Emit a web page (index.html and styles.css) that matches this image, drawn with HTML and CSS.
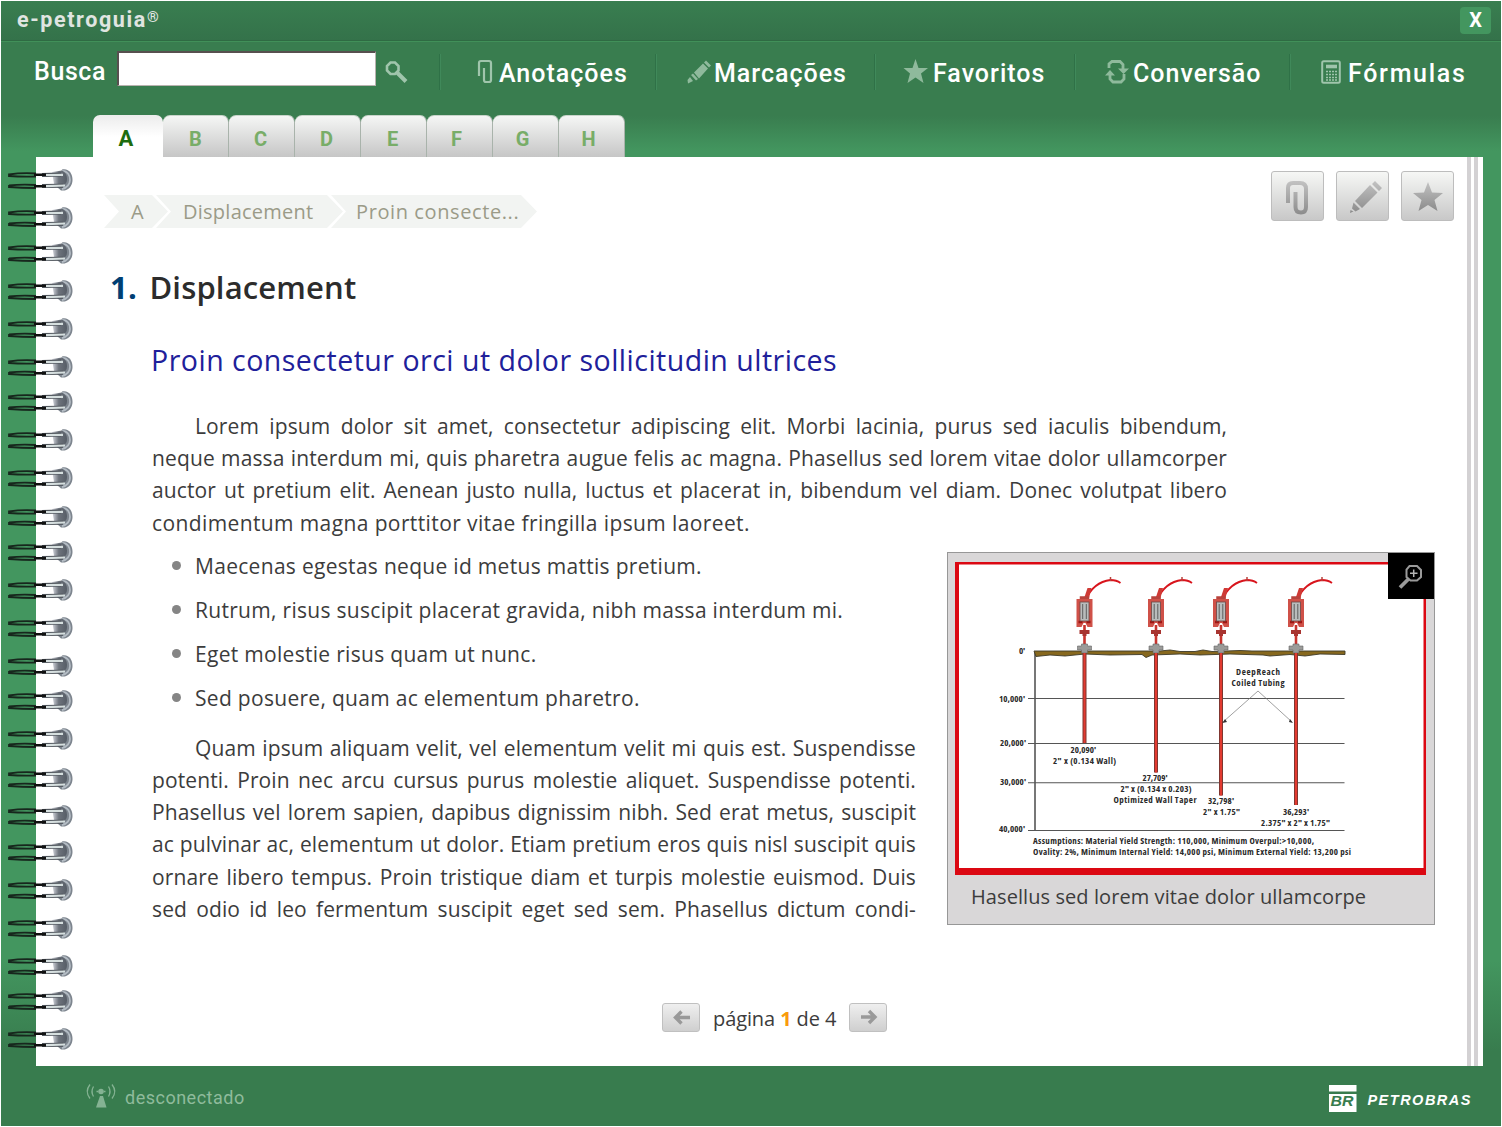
FILE: index.html
```
<!DOCTYPE html>
<html lang="pt-BR">
<head>
<meta charset="utf-8">
<title>e-petroguia</title>
<link rel="stylesheet" href="styles.css">
</head>
<body>
<svg class="defs" width="0" height="0" aria-hidden="true">
  <defs>
    <linearGradient id="iconGrad" x1="0" y1="0" x2="0" y2="1"><stop offset="0" stop-color="#c2c2c2"/><stop offset="1" stop-color="#8b8b8b"/></linearGradient>
    <linearGradient id="clipGrad" gradientUnits="userSpaceOnUse" x1="0" y1="0" x2="0" y2="34"><stop offset="0" stop-color="#c2c2c2"/><stop offset="1" stop-color="#8b8b8b"/></linearGradient>
    <linearGradient id="capGrad" x1="0" y1="0" x2="1" y2="0"><stop offset="0" stop-color="#d9dbe2"/><stop offset=".45" stop-color="#6d737c"/><stop offset="1" stop-color="#565d66"/></linearGradient>
    <g id="ring">
      <path d="M54 -10.500C61 -12 64.500 -6 64.500 0S60 11.500 53 10.500L49 7Z" fill="#7d858e"/>
      <path d="M54 -9C60 -9 62 -4 62 0S59 8 54 9" fill="none" stroke="#b4bcc4" stroke-width="1.800"/>
      <path d="M44 -8L54 -9.500Q59 -7 59 -1Q59 5 53 6L46 4Z" fill="url(#capGrad)"/>
      <path d="M34 -5L53 -5.500M34 6L55 5.800" stroke="#4b5158" stroke-width="4"/>
      <path d="M38 -5L55 -5.200M38 6.100L57 5.500" stroke="#d6dfdf" stroke-width="2.200"/>
      <path d="M1 -5.500Q14 -7.500 28 -6.500M1 -4Q14 -3 28 -3.500M1 5.500Q14 4 28 5M1 7Q14 8 28 8M1 -6.500V-3M1 5V8" fill="none" stroke="#17271d" stroke-width="1.800"/>
      <path d="M26 -5.200H38M26 6.300H38" stroke="#111" stroke-width="2.600"/>
    </g>
    <g id="rig">
      <path d="M1 -53Q9 -71 26 -73Q32 -73 36 -70" fill="none" stroke="#d8141c" stroke-width="1.800"/>
      <path d="M-1 -53L3 -65L7 -65L4 -53Z" fill="#cf3a35"/>
      <path d="M26 -76V-72M-4 -56H4V-53H-4Z" stroke="#b8433c" stroke-width="1.500" fill="#b8433c"/>
      <path d="M-8 -54H8V-26H3L1 -30H-1L-3 -26H-8Z" fill="#cf5148"/>
      <path d="M-6 -31H-2M2 -31H6" stroke="#a01613" stroke-width="2.500"/>
      <rect x="-4.500" y="-51" width="9" height="19" fill="#b9bcbc" stroke="#6c4845" stroke-width=".8"/>
      <path d="M-1.800 -49V-34M1.800 -49V-34" stroke="#555" stroke-width=".9"/>
      <path d="M0 -28V-5" stroke="#c8342e" stroke-width="2.600"/>
      <path d="M-5 -23H5V-19H2V-17H-2V-19H-5Z" fill="#a83430"/>
      <path d="M-7 -7H-3V-9H3V-7H7V-3H3V0H-3V-3H-7Z" fill="#9b9b99" stroke="#666" stroke-width=".6"/>
    </g>
  </defs>
</svg>

<div class="app">
  <header class="titlebar">
    <span class="brand">e-petroguia<sup>®</sup></span>
    <button class="close">X</button>
  </header>

  <div class="toolbar">
    <label class="search"><span class="search-label">Busca</span><input type="text">
      <svg width="24" height="24" viewBox="0 0 24 24"><path d="M5.500 2.500H10L13.500 6V10.500L10 14H5.500L2 10.500V6Z" fill="none" stroke="#a0c5ac" stroke-width="2.600"/><path d="M12 12.500L21 21.500" stroke="#a0c5ac" stroke-width="4"/></svg>
    </label>
    <nav class="nav">
      <a class="nav-item notes"><svg viewBox="0 0 26 26"><path d="M8 17V4Q8 2 10 2H18Q20 2 20 4V21Q20 23 18 23H15Q13 23 13 21V9" fill="none" stroke="#a0c5ac" stroke-width="2.200"/></svg><span>Anotações</span></a>
      <a class="nav-item marks"><svg viewBox="0 0 26 26"><path d="M8 13.500L17 4.500L22 9.500L13 19.500ZM18 3.500L20 1.500L25 6.500L23 8.500ZM5 16L7 14.500L12 20L10 21.500ZM1.500 21L4 18L7 22L2 24.500Z" fill="#8fba9c"/></svg><span>Marcações</span></a>
      <a class="nav-item favs"><svg viewBox="0 0 26 26"><path d="M10.500 0L13.500 9H23L16 14.500L18.500 24L10.500 18.500L2.500 24L5 14.500L-1.500 9H7.500Z" fill="#8fba9c"/></svg><span>Favoritos</span></a>
      <a class="nav-item conv"><svg viewBox="0 0 26 26"><path d="M4 9V5L7 2.500H15L18 5.500V11M19 15V20L16 23H8L5 20V15" fill="none" stroke="#8fba9c" stroke-width="2.800"/><path d="M13 9.500H24L18.500 15ZM0 16.500H10L5 11Z" fill="#8fba9c"/></svg><span>Conversão</span></a>
      <a class="nav-item calc"><svg viewBox="0 0 26 26"><rect x="2.200" y="2.200" width="17.600" height="21.600" rx="1.500" fill="none" stroke="#a0c5ac" stroke-width="2"/><path d="M6 7.500H17" stroke="#a0c5ac" stroke-width="3.600"/><path d="M6 12.500H17M6 15.500H17M6 18.500H17M6 21H17" stroke="#a0c5ac" stroke-width="1.700" stroke-dasharray="2 1"/></svg><span>Fórmulas</span></a>
    </nav>
  </div>

  <div class="tabs">
    <a class="tab active">A</a><a class="tab">B</a><a class="tab">C</a><a class="tab">D</a><a class="tab">E</a><a class="tab">F</a><a class="tab">G</a><a class="tab">H</a>
  </div>

  <main class="sheet">
    <svg class="binding" width="68" height="909" viewBox="0 0 68 909">
      <use href="#ring" y="23"/><use href="#ring" y="61"/><use href="#ring" y="96"/><use href="#ring" y="134"/><use href="#ring" y="172"/><use href="#ring" y="210"/><use href="#ring" y="245"/><use href="#ring" y="283"/><use href="#ring" y="321"/><use href="#ring" y="360"/><use href="#ring" y="395"/><use href="#ring" y="433"/><use href="#ring" y="471"/><use href="#ring" y="509"/><use href="#ring" y="544"/><use href="#ring" y="582"/><use href="#ring" y="622"/><use href="#ring" y="659"/><use href="#ring" y="695"/><use href="#ring" y="733"/><use href="#ring" y="771"/><use href="#ring" y="809"/><use href="#ring" y="844"/><use href="#ring" y="882"/>
    </svg>

    <div class="page-head">
      <ol class="crumbs">
        <li class="c1">A</li><li class="c2">Displacement</li><li class="c3">Proin consecte...</li>
      </ol>
      <div class="actions">
        <button><svg width="52" height="49" viewBox="0 0 52 49"><g transform="translate(15 9)"><path d="M2 22V7Q2 2 7 2H14Q20 2 20 8V26Q20 31.500 15 31.500Q9.500 31.500 9.500 26V11" fill="none" stroke="url(#clipGrad)" stroke-width="4"/></g></svg></button>
        <button><svg width="52" height="49" viewBox="0 0 52 49"><path d="M36 12L39 9L46 16L43 19ZM34 13L41.500 20.500L26 36L19 29ZM17.500 30.500L24 37L19.500 39.500L16 36.500ZM14.500 38L17.500 39.500L14 41Z" fill="url(#iconGrad)"/></svg></button>
        <button><svg width="52" height="49" viewBox="0 0 52 49"><path d="M27 10L31 20.500L42 21L33.500 28L36.500 39L27 33L17.500 39L20.500 28L12 21L23 20.500Z" fill="url(#iconGrad)"/></svg></button>
      </div>
    </div>

    <h1><span class="num">1.</span><span class="title">Displacement</span></h1>
    <h2>Proin consectetur orci ut dolor sollicitudin ultrices</h2>

    <p class="wide">
      <span class="line first">Lorem ipsum dolor sit amet, consectetur adipiscing elit. Morbi lacinia, purus sed iaculis bibendum,</span>
      <span class="line">neque massa interdum mi, quis pharetra augue felis ac magna. Phasellus sed lorem vitae dolor ullamcorper</span>
      <span class="line">auctor ut pretium elit. Aenean justo nulla, luctus et placerat in, bibendum vel diam. Donec volutpat libero</span>
      <span class="line last">condimentum magna porttitor vitae fringilla ipsum laoreet.</span>
    </p>

    <div class="columns">
      <div class="text">
        <ul>
          <li>Maecenas egestas neque id metus mattis pretium.</li>
          <li>Rutrum, risus suscipit placerat gravida, nibh massa interdum mi.</li>
          <li>Eget molestie risus quam ut nunc.</li>
          <li>Sed posuere, quam ac elementum pharetro.</li>
        </ul>
        <p>
          <span class="line first">Quam ipsum aliquam velit, vel elementum velit mi quis est. Suspendisse</span>
          <span class="line">potenti. Proin nec arcu cursus purus molestie aliquet. Suspendisse potenti.</span>
          <span class="line">Phasellus vel lorem sapien, dapibus dignissim nibh. Sed erat metus, suscipit</span>
          <span class="line">ac pulvinar ac, elementum ut dolor. Etiam pretium eros quis nisl suscipit quis</span>
          <span class="line">ornare libero tempus. Proin tristique diam et turpis molestie euismod. Duis</span>
          <span class="line">sed odio id leo fermentum suscipit eget sed sem. Phasellus dictum condi-</span>
        </p>
      </div>

      <figure>
        <svg class="diagram" width="471" height="313" viewBox="955 562 471 313">
          <rect x="955" y="562" width="471" height="313" fill="#db0812"/>
          <rect x="959" y="564.500" width="464.500" height="303.500" fill="#fff"/>
          <g stroke="#555" stroke-width="1.100">
            <path d="M1028 698.500H1344.500M1028 743.500H1344.500M1028 782.700H1344.500M1028 830.500H1344.500"/>
            <path d="M1035 652V830.500" stroke-width="1.600"/>
          </g>
          <path d="M1034 651H1160L1170 650L1180 651.500H1195L1203 650L1212 651.500L1240 650.500L1252 651H1345V654.500L1320 654L1305 656L1290 654.500L1270 656L1263 655L1230 654L1200 655L1180 654L1152 655L1146 657.500L1142 654.500L1110 655L1085 654L1065 656L1050 655L1036 656.500Z" fill="#87681e" stroke="#3d3a28" stroke-width=".9"/>
          <use href="#rig" x="1084.500" y="653"/><use href="#rig" x="1156" y="653"/><use href="#rig" x="1221" y="653"/><use href="#rig" x="1296" y="653"/>
          <g stroke="#7f3630" stroke-width="4"><path d="M1084.500 653V743M1156 653V772.500M1221 653V795.500M1296 653V805"/></g>
          <g stroke="#e23a30" stroke-width="2"><path d="M1084.500 653V743M1156 653V772.500M1221 653V795.500M1296 653V805"/></g>
          <path d="M1223 722L1258 691L1292 722" fill="none" stroke="#777" stroke-width=".7"/>
          <path d="M1222.500 723L1225 719L1227 722ZM1293 723L1290 719L1289 722Z" fill="#333"/>
          <g class="dlabels">
            <text x="1019" y="653.500" textLength="6">0'</text>
            <text x="999" y="701.500" textLength="26">10,000'</text>
            <text x="1000" y="746" textLength="26">20,000'</text>
            <text x="1000" y="785" textLength="26">30,000'</text>
            <text x="999" y="832" textLength="26">40,000'</text>
            <text x="1070.500" y="753" textLength="25.500">20,090'</text>
            <text x="1053" y="763.500" textLength="63">2" x (0.134 Wall)</text>
            <text x="1142.500" y="780.500" textLength="25">27,709'</text>
            <text x="1120.500" y="791.500" textLength="71">2" x (0.134 x 0.203)</text>
            <text x="1113.500" y="803" textLength="83">Optimized Wall Taper</text>
            <text x="1208" y="804" textLength="26">32,798'</text>
            <text x="1203" y="815" textLength="37">2" x 1.75"</text>
            <text x="1283" y="815" textLength="26">36,293'</text>
            <text x="1261" y="826" textLength="69">2.375" x 2" x 1.75"</text>
            <text x="1236" y="674.500" textLength="44">DeepReach</text>
            <text x="1231.500" y="685.500" textLength="53">Coiled Tubing</text>
            <text x="1033" y="843.500" textLength="281">Assumptions: Material Yield Strength: 110,000, Minimum Overpul:&gt;10,000,</text>
            <text x="1033" y="854.500" textLength="318">Ovality: 2%, Minimum Internal Yield: 14,000 psi, Minimum External Yield: 13,200 psi</text>
          </g>
        </svg>
        <figcaption>Hasellus sed lorem vitae dolor ullamcorpe</figcaption>
        <button class="enlarge"><svg width="46" height="46" viewBox="0 0 46 46"><path d="M21.500 13H29L33 17V24L29 27.500H22.500L18.500 24V16.500Z" fill="none" stroke="#9a9a9a" stroke-width="2"/><path d="M25.700 16.500V24M22 20.300H29.500" stroke="#b5b5b5" stroke-width="1.500"/><path d="M20.500 26L12 34.500" stroke="#9a9a9a" stroke-width="3.800"/></svg></button>
      </figure>
    </div>

    <div class="pager">
      <button><svg width="36" height="27" viewBox="0 0 36 27"><path d="M27 13.500H13.500M18.500 7.500L12.500 13.500L18.500 19.500" fill="none" stroke="#999" stroke-width="3.400"/></svg></button>
      <span class="pages">página <b>1</b> de 4</span>
      <button><svg width="36" height="27" viewBox="0 0 36 27"><path d="M11 13H24.500M19 7L25 13L19 19" fill="none" stroke="#999" stroke-width="3.400"/></svg></button>
    </div>
  </main>

  <footer class="footer">
    <div class="status">
      <svg width="30" height="24" viewBox="0 0 30 24"><path d="M14 12H17L20.500 23.500H10Z" fill="#85b393"/><circle cx="15" cy="7.500" r="2.800" fill="#85b393"/><path d="M10.500 7.500H12M18 7.500H19.500" stroke="#85b393" stroke-width="1.500"/><path d="M7.500 2.500Q4.500 7.500 7.500 12.500M22.500 2.500Q25.500 7.500 22.500 12.500M4 .5Q-1.500 7.500 4 14.500M26 .5Q31.500 7.500 26 14.500" fill="none" stroke="#85b393" stroke-width="1.300"/></svg>
      <span>desconectado</span>
    </div>
    <div class="company">
      <svg width="28" height="27" viewBox="0 0 28 27"><path d="M0 0H27.500V6.500H0ZM0 9H27.500V27H0Z" fill="#fff"/><text class="br" x="1.500" y="20.500" textLength="23" lengthAdjust="spacingAndGlyphs">BR</text></svg>
      <span>PETROBRAS</span>
    </div>
  </footer>
</div>
</body>
</html>
```
FILE: styles.css
```
* { box-sizing: border-box; }

body {
  margin: 0;
  background: #fff;
  font-family: "Open Sans", "Noto Sans", sans-serif;
  font-stretch: 90%;
  color: #3c3c3c;
}

.defs { position: absolute; }

button {
  padding: 0;
  margin: 0;
  border: 0;
  font: inherit;
}

svg { display: block; flex: none; overflow: visible; }
h1, h2, p, ul, ol, figure { margin: 0; padding: 0; font-weight: normal; }
ul, ol { list-style: none; }

.app {
  width: 1502px;
  height: 1127px;
  border: 1px solid #fff;
  display: flex;
  flex-direction: column;
  background: linear-gradient(#397d4f 115px, #43965f 150px, #43965f 960px, #387c4e 1050px);
}

.titlebar {
  height: 41px;
  flex: none;
  display: flex;
  align-items: flex-start;
  justify-content: space-between;
  padding: 6px 10px 0 16px;
  background: linear-gradient(#397e50, #34724a 39px, #2f6b43 39px, #2f6b43 40px, #419059 40px);
}

.brand {
  font: 700 21.500px/26px Roboto, sans-serif;
  letter-spacing: 1.6px;
  color: #e0e5e1;
}

.brand sup {
  font-size: 15px;
  line-height: 0;
  vertical-align: 5px;
  letter-spacing: 0;
}

.close {
  width: 31px;
  height: 27px;
  border-radius: 4px;
  background: #43965f;
  color: #fff;
  font: 700 20px/27px Roboto, sans-serif;
}

.toolbar {
  height: 73px;
  flex: none;
  display: flex;
  font-family: Roboto, sans-serif;
  color: #fff;
}

.search {
  width: 438px;
  flex: none;
  display: flex;
  padding: 9px 0 0 33px;
}

.search-label {
  width: 83px;
  font-size: 25px;
  font-weight: 500;
  line-height: 42px;
  letter-spacing: .6px;
}

.search input {
  width: 259px;
  height: 35px;
  background: #fff;
  border: 1px solid #b9b3b0;
  border-top: 2px solid #57504f;
  border-left: 2px solid #57504f;
  padding: 0;
}

.search svg { margin: 9px 0 0 9px; }

.nav { display: flex; flex: none; padding-top: 12px; }

.nav-item {
  width: 216px;
  flex: none;
  height: 36px;
  display: flex;
  gap: 2px;
  padding-left: 30px;
  border-left: 1px solid #2f7147;
  box-shadow: inset 1px 0 #40895a;
  font-size: 25px;
  font-weight: 500;
  line-height: 39px;
  letter-spacing: 1px;
}

.nav-item svg { width: 26px; height: 26px; margin-top: 5px; }
.notes { padding-left: 31px; }
.marks { width: 219px; }
.favs { width: 200px; }
.conv { width: 215px; }
.calc { width: 210px; letter-spacing: 1.700px; }

.tabs {
  height: 42px;
  flex: none;
  display: flex;
  padding-left: 92px;
}

.tab {
  width: 66px;
  border-radius: 7px 7px 0 0;
  background: linear-gradient(#f5f6f5, #c6c6c6);
  border-right: 1px solid #a9b3ab;
  border-top: 1px solid #c8d4ca;
  text-align: center;
  font: 700 20px/46px Roboto, sans-serif;
  color: #78ad68;
}

.tab:nth-child(n+3) { padding-right: 2px; }
.tab:nth-child(n+6) { padding-right: 6px; }

.tab.active {
  width: 70px;
  padding-right: 4px;
  border: 0;
  font-size: 22px;
  line-height: 48px;
  color: #1d6c0e;
  background: linear-gradient(#ececec, #fff 22px);
}

.sheet {
  position: relative;
  height: 909px;
  flex: none;
  margin: 0 18px 0 35px;
  padding: 14px 0 0 68px;
  background: linear-gradient(90deg, #fff 1431px, #d3d1d3 1431px, #d3d1d3 1435px, #fff 1435px, #fff 1438px, #d3d1d3 1438px, #d3d1d3 1442px, #fff 1442px);
}

.binding {
  position: absolute;
  left: -28px;
  top: 0;
}

.page-head {
  display: flex;
  justify-content: space-between;
  height: 95px;
}

.crumbs { display: flex; margin-top: 24px; height: 33px; }

.crumbs li {
  height: 33px;
  line-height: 34px;
  font-size: 20px;
  letter-spacing: .25px;
  white-space: nowrap;
  color: #9b9b88;
  background: #f2f4f2;
  clip-path: polygon(0 0, calc(100% - 16px) 0, 100% 50%, calc(100% - 16px) 100%, 0 100%, 15px 50%);
}

.crumbs .c1 { width: 64px; padding-left: 27px; }
.crumbs .c2 { width: 187px; margin-left: -12px; padding-left: 27px; }
.crumbs .c3 { width: 206px; margin-left: -12px; padding-left: 25px; letter-spacing: .6px; }

.actions { display: flex; gap: 12px; padding-right: 29.500px; }

.actions button {
  width: 53px;
  height: 50px;
  border: 1px solid #bdbdbd;
  border-radius: 3px;
  background: linear-gradient(#f6f7f5, #c8c8c8);
  overflow: hidden;
}

.actions button svg { margin: -1px; }

h1 {
  display: flex;
  height: 40px;
  line-height: 42px;
  padding-left: 6px;
  font-size: 31px;
  font-weight: 600;
  letter-spacing: .15px;
  color: #2c2c2c;
}

.num { width: 39.500px; font-weight: 700; color: #003f74; }

h2 {
  margin: 34px 0 0 47px;
  height: 40px;
  line-height: 41px;
  font-size: 28.500px;
  letter-spacing: .5px;
  color: #20209a;
  white-space: nowrap;
}

p, li, figcaption { font-size: 21px; font-weight: 430; white-space: nowrap; }

.wide {
  margin: 30px 0 0 48px;
  width: 1075px;
}

.line {
  display: block;
  height: 32.2px;
  line-height: 32px;
  letter-spacing: .12px;
  text-align-last: justify;
}

.first { padding-left: 43px; }
.last { text-align-last: left; letter-spacing: .39px; }

.columns {
  display: flex;
  justify-content: space-between;
  padding: 5px 48px 0 48px;
}

.text { width: 764px; }

.text li {
  display: flex;
  align-items: center;
  height: 44px;
  padding-left: 20px;
  letter-spacing: .3px;
}

.text li::before {
  content: "";
  width: 9px;
  height: 9px;
  margin: -1px 14px 0 0;
  border-radius: 50%;
  background: #858585;
}

.text p { margin-top: 12px; }

figure {
  position: relative;
  width: 488px;
  height: 373px;
  margin-top: 8px;
  padding: 9px 0 0 7px;
  border: 1px solid #979797;
  background: #d9d7d8;
}

.enlarge {
  position: absolute;
  top: 0;
  right: 0;
  background: #000;
}

.dlabels {
  font-family: "Open Sans", sans-serif;
  font-size: 9px;
  font-weight: 700;
  font-stretch: 75%;
  fill: #2a2a2a;
}

figcaption {
  padding-left: 16px;
  font-size: 20px;
  letter-spacing: .08px;
  line-height: 43px;
}

.pager {
  display: flex;
  justify-content: center;
  gap: 13px;
  margin-top: 78px;
  padding-right: 38px;
}

.pager button {
  width: 38px;
  height: 29px;
  border: 1px solid #c0c0c0;
  border-radius: 3px;
  background: linear-gradient(#efefef, #cfcfcf);
}

.pages {
  width: 123px;
  font-size: 20px;
  font-weight: 430;
  letter-spacing: -.1px;
  line-height: 31px;
  white-space: nowrap;
}

.pages b { color: #f99b0c; }

.footer {
  flex: 1;
  display: flex;
  justify-content: space-between;
  padding: 0 29px 0 85px;
}

.status, .company { display: flex; }
.status svg { margin-top: 18px; }

.status span {
  margin-left: 9px;
  font: 400 18px/63px Roboto, sans-serif;
  letter-spacing: .5px;
  color: #8fbb9c;
}

.company svg { margin-top: 19px; }
.br { font: italic 700 15px "Liberation Sans", sans-serif; fill: #387c4e; }

.company span {
  margin-left: 10px;
  font: italic 700 14.500px/69px "Liberation Sans", sans-serif;
  letter-spacing: 1.5px;
  color: #fff;
}
```
